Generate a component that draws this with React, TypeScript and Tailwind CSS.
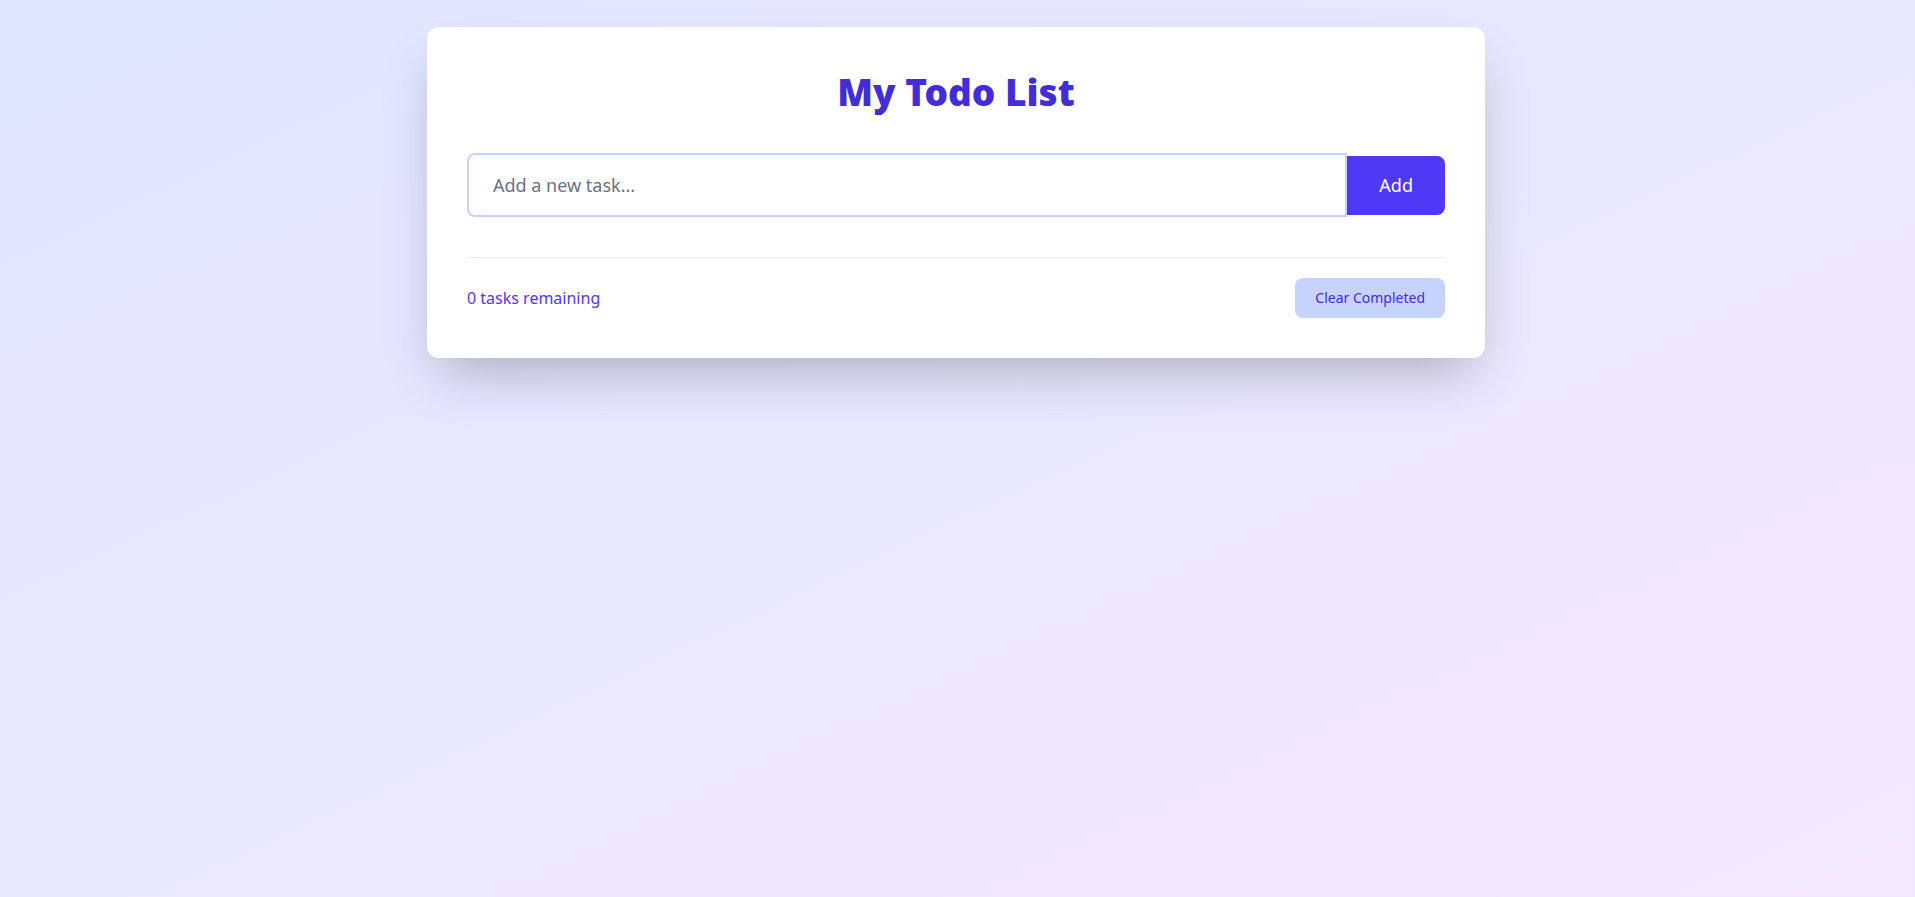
import { useState } from 'react'

export default function App() {
  const [text, setText] = useState('')
  const [todos, setTodos] = useState<{ id: number; text: string; done: boolean }[]>([])
  const remaining = todos.filter(t => !t.done).length

  const add = () => {
    if (!text.trim()) return
    setTodos([...todos, { id: Date.now(), text: text.trim(), done: false }])
    setText('')
  }

  return (
    <div className="min-h-screen bg-linear-to-br from-indigo-100 to-purple-100 pt-[27px] font-['Noto_Sans',sans-serif]">
      <div className="ml-[427px] w-[1058px] bg-white rounded-xl shadow-2xl p-10">
        <h1 className="text-center text-[37px] leading-10 font-black text-indigo-700 pt-[5px] mb-[41px]">My Todo List</h1>
        <div className="flex items-center">
          <input
            value={text}
            onChange={e => setText(e.target.value)}
            onKeyDown={e => e.key === 'Enter' && add()}
            placeholder="Add a new task..."
            className="flex-1 border-2 border-indigo-200 rounded-l-lg px-6 py-4 text-lg leading-7 outline-none placeholder:text-gray-500"
          />
          <button onClick={add} className="bg-indigo-600 text-white text-lg leading-7 px-8 py-[15.5px] rounded-r-lg">Add</button>
        </div>
        {todos.length > 0 && (
          <ul className="mt-6 space-y-2">
            {todos.map(t => (
              <li key={t.id} className="flex items-center gap-3 text-gray-700">
                <input type="checkbox" checked={t.done} onChange={() => setTodos(todos.map(x => x.id === t.id ? { ...x, done: !x.done } : x))} />
                <span className={t.done ? 'line-through text-gray-400' : ''}>{t.text}</span>
              </li>
            ))}
          </ul>
        )}
        <div className="mt-10 border-t border-indigo-100 pt-5 flex justify-between items-center">
          <span className="text-indigo-600">{remaining} tasks remaining</span>
          <button onClick={() => setTodos(todos.filter(t => !t.done))} className="bg-indigo-200 text-indigo-700 text-sm px-5 py-2.5 rounded-lg">Clear Completed</button>
        </div>
      </div>
    </div>
  )
}
